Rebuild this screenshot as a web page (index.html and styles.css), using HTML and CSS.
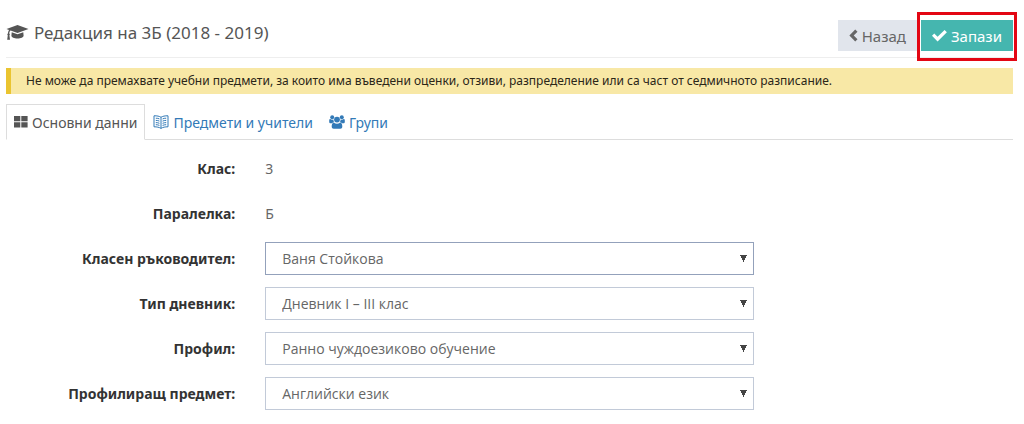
FILE: index.html
```html
<!DOCTYPE html>
<html lang="bg">
<head>
<meta charset="utf-8">
<meta name="viewport" content="width=device-width, initial-scale=1">
<title>Редакция на 3Б</title>
<link rel="stylesheet" href="styles.css">
</head>
<body>
<header class="page-head">
  <h1 class="page-title">
    <svg class="icon-cap" viewBox="0 0 23 17" aria-hidden="true"><path d="M11.5 1 22.5 5 11.5 9 4.6 6.5C3.7 7.2 3.4 8.3 3.3 9.4c.7.5.7 1.4.1 1.9l.6 4.4H1.2l.6-4.4c-.6-.5-.6-1.4.1-1.9.1-1.3.4-2.4 1.1-3.5L.5 5zM5.7 8.2l5.8 2.1 5.8-2.1.3 3.5c0 1.5-2.7 2.7-6.1 2.7s-6.1-1.2-6.1-2.7z"/></svg>
    <span>Редакция на 3Б (2018 - 2019)</span>
  </h1>
  <div class="actions">
    <button type="button" class="btn btn-back"><svg class="icon-back" viewBox="0 0 8 12" aria-hidden="true"><path d="M5.600.400 7.700 2.500 4.200 6l3.500 3.500-2.100 2.100L.2 6z"/></svg>Назад</button>
    <button type="submit" form="class-form" class="btn btn-save"><svg class="icon-check" viewBox="0 0 14 12" aria-hidden="true"><path d="M0 6.3 2.1 4.2 5.2 7.2 11.7.8 13.9 2.9 5.2 11.5z"/></svg>Запази</button>
  </div>
</header>
<p class="alert">Не може да премахвате учебни предмети, за които има въведени оценки, отзиви, разпределение или са част от седмичното разписание.</p>
<nav class="tabs">
  <a class="tab tab-active" href="#main"><svg class="icon-grid" viewBox="0 0 14 12" aria-hidden="true"><path d="M0 0h6.300v5.200H0zM7.300 0h6.300v5.200H7.300zM0 6.200h6.300v5.200H0zM7.300 6.200h6.300v5.200H7.300z"/></svg>Основни данни</a>
  <a class="tab" href="#subjects"><svg class="icon-book" viewBox="0 0 16 14" aria-hidden="true"><path d="M8 2.300C6.500 1.200 3.900.7 1 .8v11c2.900 0 5.200.4 7 1.600 1.800-1.200 4.100-1.600 7-1.600V.8c-2.900-.1-5.500.4-7 1.500zm0 0v11M2.800 3.200c1.400 0 2.500.2 3.600.7M2.800 5.400c1.400 0 2.500.2 3.600.7M2.800 7.600c1.400 0 2.500.2 3.600.7M2.800 9.700c1.400 0 2.500.2 3.600.7M13.200 3.200c-1.400 0-2.500.2-3.600.7M13.200 5.400c-1.400 0-2.500.2-3.600.7M13.200 7.600c-1.400 0-2.500.2-3.600.7M13.200 9.700c-1.400 0-2.500.2-3.600.7"/></svg>Предмети и учители</a>
  <a class="tab" href="#groups"><svg class="icon-users" viewBox="0 0 16 14" aria-hidden="true"><circle cx="3.200" cy="2.200" r="2"/><circle cx="12.800" cy="2.200" r="2"/><circle cx="8" cy="4.600" r="2.900"/><path d="M.2 5.500C.2 4.500.6 4 1.200 4c.9.700 2.300.9 3.300.4C4.400 5.700 4.700 6.500 5.300 7.300 4.300 7.300 3.600 7.600 3 8.300H1.700C.8 8.300.2 7.800.2 7zM15.800 5.500c0-1-.4-1.500-1-1.500-.9.700-2.300.9-3.300.4.100 1.300-.2 2.100-.8 2.900 1 0 1.700.3 2.300 1h1.300c.9 0 1.500-.5 1.500-1.300zM5 7.800c1.800 1.300 4.200 1.300 6 0 1.700 0 2.300 1.600 2.300 3.900 0 1.300-.8 2-2 2H4.700c-1.200 0-2-.7-2-2C2.700 9.400 3.300 7.800 5 7.800z"/></svg>Групи</a>
</nav>
<form id="class-form" class="form">
  <div class="row"><span class="label">Клас:</span><div class="field"><span class="value">3</span></div></div>
  <div class="row"><span class="label">Паралелка:</span><div class="field"><span class="value">Б</span></div></div>
  <div class="row"><label class="label" for="teacher">Класен ръководител:</label><div class="field"><select id="teacher" class="select select-focus"><option>Ваня Стойкова</option></select></div></div>
  <div class="row"><label class="label" for="journal">Тип дневник:</label><div class="field"><select id="journal" class="select"><option>Дневник I – III клас</option></select></div></div>
  <div class="row"><label class="label" for="profile">Профил:</label><div class="field"><select id="profile" class="select"><option>Ранно чуждоезиково обучение</option></select></div></div>
  <div class="row"><label class="label" for="subject">Профилиращ предмет:</label><div class="field"><select id="subject" class="select"><option>Английски език</option></select></div></div>
</form>
</body>
</html>
```
FILE: styles.css
```css
* { box-sizing: border-box; }
body {
  margin: 0;
  padding: 8px 11px 0 6px;
  overflow-x: hidden;
  background: #fff;
  color: #666;
  font-family: "Noto Sans", "Open Sans", sans-serif;
  font-size: 14px;
}
svg { flex: none; fill: currentColor; }
.page-head {
  display: flex;
  justify-content: space-between;
  height: 50px;
  border-bottom: 1px solid #eee;
}
.page-title {
  display: flex;
  align-items: center;
  gap: 5px;
  margin: 0;
  color: #555;
  font-size: 17px;
  font-weight: 400;
}
.icon-cap { width: 23px; height: 17px; }
.actions {
  display: flex;
  align-items: flex-start;
  gap: 4px;
  padding-top: 12px;
}
.btn {
  display: flex;
  align-items: center;
  gap: 4px;
  height: 31px;
  padding: 0 11px;
  border: 0;
  font: 15px "Noto Sans", "Open Sans", sans-serif;
}
.btn-back { background: #e1e5ec; color: #666; }
.btn-save { position: relative; background: #45b6af; color: #fff; }
.btn-save::after {
  content: "";
  position: absolute;
  inset: -8px -4px -10px;
  border: 3px solid #e30613;
}
.icon-back { width: 9px; height: 13px; }
.icon-check { width: 15px; height: 13px; }
.alert {
  margin: 10px 0;
  padding: 0 15px;
  border-left: 5px solid #eac430;
  background: #f8e8a6;
  color: #2b2618;
  font-size: 12px;
  line-height: 26px;
}
.tabs {
  display: flex;
  height: 36px;
  border-bottom: 1px solid #ddd;
}
.tab {
  display: flex;
  align-items: center;
  gap: 4px;
  height: 36px;
  padding: 0 7px;
  border: 1px solid transparent;
  color: #337ab7;
  text-decoration: none;
}
.tab-active {
  border-color: #ddd;
  border-bottom-color: #fff;
  background: #fff;
  color: #555;
}
.icon-grid { width: 14px; height: 12px; }
.icon-book { width: 16px; height: 14px; fill: none; stroke: currentColor; }
.icon-users { width: 16px; height: 14px; }
.form {
  display: grid;
  gap: 12px;
  margin: 12px -15px 0;
  font-size: 14px;
}
.row {
  display: grid;
  grid-template-columns: 25% 50%;
  align-items: center;
  min-height: 33px;
}
.label {
  padding: 0 15px;
  color: #333;
  font-weight: 700;
  text-align: right;
}
.field { padding: 0 15px; }
.select {
  display: block;
  width: 100%;
  height: 33px;
  padding: 0 16px;
  border: 1px solid #c2cad8;
  border-radius: 0;
  appearance: none;
  background: #fff conic-gradient(from -27deg at 50% 100%, #444 54deg, transparent 0) no-repeat right 6px center / 7px 7px;
  color: #666;
  font: 14px "Open Sans", "Noto Sans", sans-serif;
}
.select-focus { border-color: #93a1bb; }
```
